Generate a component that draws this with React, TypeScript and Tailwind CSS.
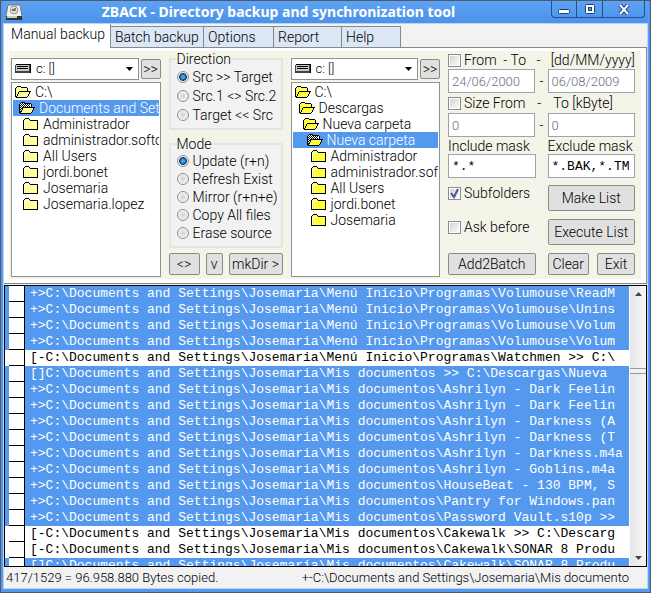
import React from "react";
import clsx from "clsx";

type FolderKind = "open" | "current" | "closed";

function Folder({ kind, tone }: { kind: FolderKind; tone: "pale" | "bright" }) {
  const body = tone === "pale" ? "fill-[#ffff9c]" : "fill-[#ffff3c]";
  if (kind === "closed") {
    return (
      <svg width="16" height="13" viewBox="0 0 16 13" shapeRendering="crispEdges" className="shrink-0" aria-hidden="true">
        <path d="M2 1h4l1 2h8v9H1V3z" className={body} />
        <path d="M2 3h5v1H2zM1 4h1v8H1z" fill="#fff" />
        <path d="M2 0h4v1H2zM1 1h1v1H1zM6 1h1v1H6zM0 2h1v10H0zM7 2h8v1H7zM1 11h14v1H1zM14 3h1v9h-1z" fill="#000" />
      </svg>
    );
  }
  const cells: [number, number][] = [];
  if (kind === "current") {
    for (let y = 1; y < 10; y++) for (let x = 1; x < 11; x++) if ((x + y) % 2 === 0) cells.push([x, y]);
  }
  return (
    <svg width="16" height="12" viewBox="0 0 16 12" shapeRendering="crispEdges" className="shrink-0" aria-hidden="true">
      <path d="M2 1h4l1 1h5v3H5l-4 6V2z" className={kind === "current" ? "fill-white" : body} />
      {cells.map(([x, y]) => (
        <rect key={`${x}-${y}`} x={x} y={y} width="1" height="1" fill="#000" />
      ))}
      <path d="M5 5h10l-3 6H1z" className={body} />
      <path
        d="M2 0h4v1H2zM1 1h1v1H1zM6 1h6v1H6zM0 2h1v9H0zM12 2h1v3h-1zM4 5h12v1H4zM3 6h1v2H3zM2 8h1v2H2zM1 10h1v1H1zM1 11h11v1H1zM14 6h1v2h-1zM13 8h1v2h-1zM12 10h1v1h-1z"
        fill="#000"
      />
    </svg>
  );
}

function DriveIcon() {
  return (
    <svg width="16" height="10" viewBox="0 0 16 10" shapeRendering="crispEdges" aria-hidden="true">
      <path d="M1 0h15v9H1z" fill="#000" />
      <path d="M0 1h15v8H0z" fill="#444" />
      <path d="M1 1h13v6H1z" fill="#c8c8c8" />
      <path d="M2 2h11v1H2zM2 4h11v1H2z" fill="#000" />
    </svg>
  );
}

function AppIcon() {
  return (
    <svg width="16" height="16" viewBox="0 0 16 16" aria-hidden="true">
      <path d="M2 1h12l2 11v3H0v-3z" fill="#f4f4f4" stroke="#777" strokeWidth="1" />
      <path d="M0 12h16v4H0z" fill="#333" />
      <path d="M1 12h10v2H1z" fill="#ccc" />
      <circle cx="8" cy="6" r="4" fill="#ddd" stroke="#9a9a9a" />
      <path d="M6 5h2v2H6z" fill="#d33" />
      <path d="M8 4h2v3H8z" fill="#3a3" />
    </svg>
  );
}

interface Node {
  name: string;
  kind: FolderKind;
  depth: 0 | 1 | 2 | 3 | 4;
}

const source: Node[] = [
  { name: "C:\\", kind: "open", depth: 0 },
  { name: "Documents and Settings", kind: "current", depth: 1 },
  { name: "Administrador", kind: "closed", depth: 2 },
  { name: "administrador.softonic", kind: "closed", depth: 2 },
  { name: "All Users", kind: "closed", depth: 2 },
  { name: "jordi.bonet", kind: "closed", depth: 2 },
  { name: "Josemaria", kind: "closed", depth: 2 },
  { name: "Josemaria.lopez", kind: "closed", depth: 2 },
];

const target: Node[] = [
  { name: "C:\\", kind: "open", depth: 0 },
  { name: "Descargas", kind: "open", depth: 1 },
  { name: "Nueva carpeta", kind: "open", depth: 2 },
  { name: "Nueva carpeta", kind: "current", depth: 3 },
  { name: "Administrador", kind: "closed", depth: 4 },
  { name: "administrador.softonic", kind: "closed", depth: 4 },
  { name: "All Users", kind: "closed", depth: 4 },
  { name: "jordi.bonet", kind: "closed", depth: 4 },
  { name: "Josemaria", kind: "closed", depth: 4 },
];

const indent = ["pl-0.5", "pl-1.5", "pl-2.5", "pl-3.5", "pl-4.5"];

function Push({ children, className }: { children: React.ReactNode; className?: string }) {
  return (
    <button
      type="button"
      className={clsx(
        "flex items-center justify-center rounded-xs border border-[#8a8a8a] bg-[#e0e0e0] whitespace-nowrap",
        className,
      )}
    >
      {children}
    </button>
  );
}

function DrivePane({ label, nodes, tone }: { label: string; nodes: Node[]; tone: "pale" | "bright" }) {
  return (
    <section className="flex min-w-0 flex-1 flex-col gap-0.5 pt-[7px]" aria-label={label}>
      <div className="flex items-center gap-0.5">
        <div className="relative min-w-0 flex-1">
          <select
            aria-label={`${label} drive`}
            className="h-[22px] w-full appearance-none border border-[#8a939c] bg-white pl-6 text-[13px]"
          >
            <option>c: []</option>
          </select>
          <span className="pointer-events-none absolute top-1.5 left-1">
            <DriveIcon />
          </span>
          <svg width="7" height="4" viewBox="0 0 7 4" className="pointer-events-none absolute top-[9px] right-1.5" aria-hidden="true">
            <path d="M0 0h7L3.500 4z" />
          </svg>
        </div>
        <Push className="h-5 w-5">&gt;&gt;</Push>
      </div>
      <ul className="h-[195px] overflow-hidden border border-[#8a939c] bg-white p-px">
        {nodes.map((n, i) => (
          <li
            key={i}
            className={clsx(
              "flex h-4 items-center gap-1 overflow-hidden whitespace-nowrap",
              indent[n.depth],
              n.kind === "current" && "bg-[#5599ee] text-white",
            )}
          >
            <Folder kind={n.kind} tone={tone} />
            {n.name}
          </li>
        ))}
      </ul>
    </section>
  );
}

function RadioGroup({ title, name, options, rowClass }: { title: string; name: string; options: string[]; rowClass: string }) {
  return (
    <fieldset className="border-2 border-[#e4e4e4] bg-[#f2f2f2] pb-1 pl-1.5">
      <legend className="px-0 leading-4">{title}</legend>
      {options.map((o, i) => (
        <label key={o} className={clsx("flex items-center gap-1 whitespace-nowrap", rowClass)}>
          <input
            type="radio"
            name={name}
            defaultChecked={i === 0}
            className="size-3 shrink-0 appearance-none rounded-full border border-[#8e8e8e] bg-radial from-[#d4d4d4] to-white checked:from-[#3fa4e8] checked:from-20% checked:via-[#123c6c] checked:via-50% checked:to-[#eeeeee] checked:to-60%"
          />
          {o}
        </label>
      ))}
    </fieldset>
  );
}

function Tick({ children, checked }: { children: React.ReactNode; checked?: boolean }) {
  return (
    <label className="flex h-4 items-center gap-[3px] whitespace-nowrap">
      <span className="relative flex size-[13px] shrink-0">
        <input
          type="checkbox"
          defaultChecked={checked}
          className="peer size-[13px] appearance-none border border-[#8c8c8c] bg-linear-to-br from-[#d0d0d0] to-white ring-1 ring-white ring-inset"
        />
        <svg viewBox="0 0 13 13" className="pointer-events-none absolute inset-0 hidden size-[13px] peer-checked:block" aria-hidden="true">
          <path d="M3 6l3 4 4-8" fill="none" stroke="#3c5a9c" strokeWidth="2" />
        </svg>
      </span>
      {children}
    </label>
  );
}

function Box({ label, value, muted, id }: { label?: string; value: string; muted?: boolean; id?: string }) {
  return (
    <input
      type="text"
      id={id}
      aria-label={label}
      defaultValue={value}
      className={clsx(
        "h-6 w-full min-w-0 border border-[#9aa4b0] bg-white pr-px pl-[3px]",
        muted ? "text-[13px] text-[#65717c]" : "font-['Liberation_Mono',monospace] text-[13px] font-normal",
      )}
    />
  );
}

const menu = "C:\\Documents and Settings\\Josemaria\\Menú Inicio\\Programas\\";
const docs = "C:\\Documents and Settings\\Josemaria\\Mis documentos";

const log: { text: string; selected: boolean }[] = [
  { text: `+>${menu}Volumouse\\ReadM`, selected: true },
  { text: `+>${menu}Volumouse\\Unins`, selected: true },
  { text: `+>${menu}Volumouse\\Volum`, selected: true },
  { text: `+>${menu}Volumouse\\Volum`, selected: true },
  { text: `[-${menu}Watchmen >> C:\\`, selected: false },
  { text: `[]${docs} >> C:\\Descargas\\Nueva`, selected: true },
  { text: `+>${docs}\\Ashrilyn - Dark Feelin`, selected: true },
  { text: `+>${docs}\\Ashrilyn - Dark Feelin`, selected: true },
  { text: `+>${docs}\\Ashrilyn - Darkness (A`, selected: true },
  { text: `+>${docs}\\Ashrilyn - Darkness (T`, selected: true },
  { text: `+>${docs}\\Ashrilyn - Darkness.m4a`, selected: true },
  { text: `+>${docs}\\Ashrilyn - Goblins.m4a`, selected: true },
  { text: `+>${docs}\\HouseBeat - 130 BPM, S`, selected: true },
  { text: `+>${docs}\\Pantry for Windows.pan`, selected: true },
  { text: `+>${docs}\\Password Vault.s10p >>`, selected: true },
  { text: `[-${docs}\\Cakewalk >> C:\\Descarg`, selected: false },
  { text: `[-${docs}\\Cakewalk\\SONAR 8 Produ`, selected: false },
  { text: `[]${docs}\\Cakewalk\\SONAR 8 Produ`, selected: true },
];

const tabs = [
  { name: "Batch backup", width: "w-[93px]" },
  { name: "Options", width: "w-[70px]" },
  { name: "Report", width: "w-[68px]" },
  { name: "Help", width: "w-[59px]" },
];

export default function App() {
  return (
    <div className="flex h-screen flex-col overflow-hidden border border-[#4f5a68] bg-[#5599ee] px-[2px] pb-[3px] font-[Roboto,sans-serif] text-[14px] leading-4 font-light text-black">
      <header className="flex h-[22px] shrink-0 items-center bg-linear-to-b from-[#5da2f4] to-[#4b92e8]">
        <span className="ml-[3px]">
          <AppIcon />
        </span>
        <h1 className="min-w-0 flex-1 pr-4 text-center font-['Noto_Sans',sans-serif] text-[14px] font-bold whitespace-nowrap text-white">
          ZBACK - Directory backup and synchronization tool
        </h1>
        <div className="mr-[3px] flex h-[17px] self-start rounded-b-sm border border-t-0 border-[#23508f] text-white">
          <button type="button" aria-label="Minimize" className="flex w-[25px] items-center justify-center border-r border-[#23508f]">
            <svg width="12" height="5" viewBox="0 0 12 5" className="mt-1" aria-hidden="true">
              <rect x=".5" y=".5" width="11" height="4" rx="1" fill="#fff" stroke="#1c3f78" />
            </svg>
          </button>
          <button type="button" aria-label="Maximize" className="flex w-[26px] items-center justify-center border-r border-[#23508f]">
            <svg width="10" height="10" viewBox="0 0 10 10" aria-hidden="true">
              <rect x=".5" y=".5" width="9" height="9" rx="1" fill="#fff" stroke="#1c3f78" />
              <rect x="3.500" y="3.500" width="3" height="3" fill="#5599ee" stroke="#1c3f78" />
            </svg>
          </button>
          <button type="button" aria-label="Close" className="flex w-[41px] items-center justify-center">
            <svg width="12" height="11" viewBox="0 0 12 11" aria-hidden="true">
              <path d="M2 1l8 9M10 1L2 10" stroke="#1c3f78" strokeWidth="4" />
              <path d="M2 1l8 9M10 1L2 10" stroke="#fff" strokeWidth="2" />
            </svg>
          </button>
        </div>
      </header>

      <div className="flex min-h-0 flex-1 flex-col border border-[#b8d4f6] bg-[#f2f2f2]">
        <nav role="tablist" className="flex h-6 shrink-0 items-end border-b border-[#85888f]">
          <button type="button" role="tab" aria-selected="true" className="-mb-px h-6 w-[107px] border-r border-[#85888f] bg-white pb-1 pl-0.5 whitespace-nowrap">
            Manual backup
          </button>
          {tabs.map((t) => (
            <button
              key={t.name}
              type="button"
              role="tab"
              aria-selected="false"
              className={clsx(
                "h-[21px] border-t border-r border-[#85888f] bg-[#dce7f5] pl-1 text-left whitespace-nowrap",
                t.width,
              )}
            >
              {t.name}
            </button>
          ))}
        </nav>

        <main className="shrink-0 border-r border-b border-[#85888f] bg-white px-[5px] pt-[3px] pb-1">
          <div className="flex gap-2 bg-[#f2f2f2] bg-[linear-gradient(45deg,transparent_42%,#fbfbc4_46%,#fbfbc4_54%,transparent_58%)] bg-size-[8px_8px] pr-1.5 pb-0.5 pl-0.5">
            <DrivePane label="Source" nodes={source} tone="pale" />

            <section className="flex w-[114px] shrink-0 flex-col">
              <RadioGroup title="Direction" name="direction" options={["Src >> Target", "Src.1 <> Src.2", "Target << Src"]} rowClass="h-[19px]" />
              <div className="mt-1.5 flex flex-col">
                <RadioGroup
                  title="Mode"
                  name="mode"
                  options={["Update (r+n)", "Refresh Exist", "Mirror (r+n+e)", "Copy All files", "Erase source"]}
                  rowClass="h-[18px]"
                />
              </div>
              <div className="mt-auto mb-0.5 flex gap-1.5">
                <Push className="h-[22px] w-[31px]">&lt;&gt;</Push>
                <Push className="h-[22px] w-[17px]">v</Push>
                <Push className="h-[22px] flex-1">mkDir &gt;</Push>
              </div>
            </section>

            <DrivePane label="Target" nodes={target} tone="bright" />

            <section className="flex w-[187px] shrink-0 flex-col">
              <div className="flex h-[18px] items-center justify-between">
                <Tick>From&nbsp; - To</Tick>
                <span>-</span>
                <span>[dd/MM/yyyy]</span>
              </div>
              <div className="flex items-center gap-1">
                <Box label="From date" value="24/06/2000" muted />
                <span>-</span>
                <Box label="To date" value="06/08/2009" muted />
              </div>
              <div className="flex h-5 items-center gap-3">
                <Tick>Size From</Tick>
                <span>-</span>
                <span className="whitespace-nowrap">To [kByte]</span>
              </div>
              <div className="flex items-center gap-1">
                <Box label="Minimum size" value="0" muted />
                <span>-</span>
                <Box label="Maximum size" value="0" muted />
              </div>
              <div className="grid grid-cols-2 gap-x-3 pt-px">
                <div className="flex min-w-0 flex-col">
                  <label htmlFor="include-mask" className="whitespace-nowrap">Include mask</label>
                  <Box id="include-mask" value="*.*" />
                </div>
                <div className="flex min-w-0 flex-col">
                  <label htmlFor="exclude-mask" className="whitespace-nowrap">Exclude mask</label>
                  <Box id="exclude-mask" value="*.BAK,*.TM" />
                </div>
              </div>
              <div className="grid grid-cols-2 items-start gap-x-3 gap-y-2 pt-[7px]">
                <Tick checked>Subfolders</Tick>
                <Push className="h-[26px]">Make List</Push>
                <Tick>Ask before</Tick>
                <Push className="h-[26px]">Execute List</Push>
                <Push className="h-[22px]">Add2Batch</Push>
                <div className="flex gap-2">
                  <Push className="h-[22px] flex-1">Clear</Push>
                  <Push className="h-[22px] w-[38px]">Exit</Push>
                </div>
              </div>
            </section>
          </div>
        </main>

        <div className="mt-px flex min-h-0 flex-1 border border-black bg-white">
          <ul className="min-w-0 flex-1 overflow-hidden font-['Liberation_Mono',monospace] text-[13px] font-normal">
            {log.map((row, i) => (
              <li
                key={i}
                className={clsx("flex h-4 pl-1 whitespace-pre", row.selected ? "bg-[#5599ee] text-white" : "bg-white text-black")}
              >
                <span className="mr-[5px] w-4 shrink-0 border-r border-b border-black bg-white" />
                {row.text}
              </li>
            ))}
          </ul>
          <div className="flex w-[17px] shrink-0 flex-col items-center border-l border-white bg-linear-to-r from-[#e6e6e6] to-[#f6f6f6] py-1.5" aria-hidden="true">
            <svg width="7" height="4" viewBox="0 0 7 4">
              <path d="M0 4h7L3.500 0z" fill="#444" />
            </svg>
            <span className="mt-[72px] h-1.5 w-full border-y border-[#999] bg-[#f2f2f2]" />
            <svg width="7" height="4" viewBox="0 0 7 4" className="mt-auto">
              <path d="M0 0h7L3.500 4z" fill="#444" />
            </svg>
          </div>
        </div>

        <footer className="flex h-[21px] shrink-0 items-center justify-between pr-[18px] pl-0.5 text-[13px] whitespace-nowrap">
          <span>417/1529 = 96.958.880 Bytes copied.</span>
          <span>+-C:\Documents and Settings\Josemaria\Mis documento</span>
        </footer>
      </div>
    </div>
  );
}
